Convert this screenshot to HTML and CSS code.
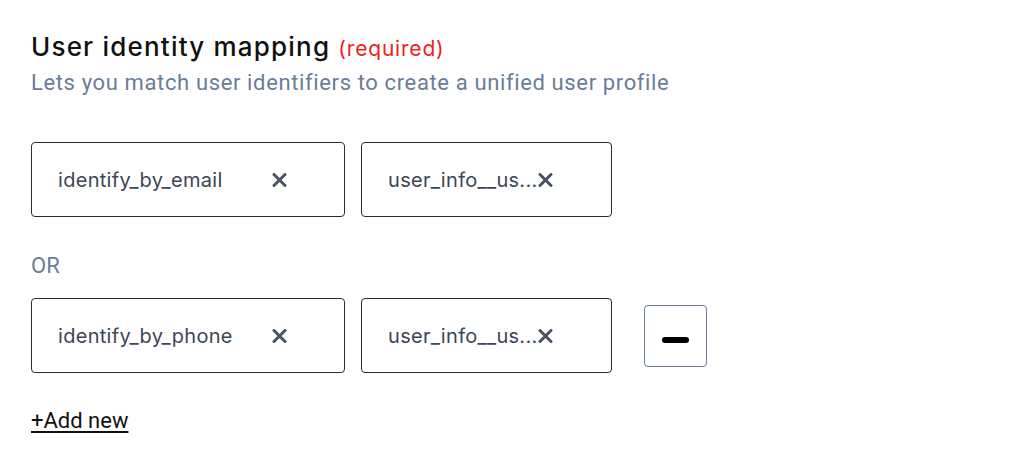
FILE: index.html
```html
<!DOCTYPE html>
<html lang="en">
<head>
  <meta charset="UTF-8">
  <title>User identity mapping</title>
  <link rel="stylesheet" href="styles.css">
</head>
<body>

<div class="mapping">
  <h2 class="title">User identity mapping <span class="required">(required)</span></h2>
  <p class="subtitle">Lets you match user identifiers to create a unified user profile</p>

  <!-- erste Zeile -->
  <div class="row">
    <div class="field field-rule">
      <span class="label">identify_by_email</span>
      <svg class="clear" width="15" height="14" viewBox="0 0 15 14"><path d="M2 1.5 L13 12.5 M13 1.5 L2 12.5" stroke="#4a5363" stroke-width="3" stroke-linecap="round"/></svg>
    </div>
    <div class="field field-key">
      <span class="label">user_info__us...</span>
      <svg class="clear" width="15" height="14" viewBox="0 0 15 14"><path d="M2 1.5 L13 12.5 M13 1.5 L2 12.5" stroke="#4a5363" stroke-width="3" stroke-linecap="round"/></svg>
    </div>
  </div>

  <div class="or">OR</div>

  <!-- zweite Zeile mit Entfernen-Button -->
  <div class="row">
    <div class="field field-rule">
      <span class="label">identify_by_phone</span>
      <svg class="clear" width="15" height="14" viewBox="0 0 15 14"><path d="M2 1.5 L13 12.5 M13 1.5 L2 12.5" stroke="#4a5363" stroke-width="3" stroke-linecap="round"/></svg>
    </div>
    <div class="field field-key">
      <span class="label">user_info__us...</span>
      <svg class="clear" width="15" height="14" viewBox="0 0 15 14"><path d="M2 1.5 L13 12.5 M13 1.5 L2 12.5" stroke="#4a5363" stroke-width="3" stroke-linecap="round"/></svg>
    </div>
    <button class="remove"><span class="bar"></span></button>
  </div>

  <a class="add-new" href="#">+Add new</a>
</div>

</body>
</html>
```

FILE: styles.css
```css
body {
  margin: 0;
  background: #fff;
  font-family: Roboto, sans-serif;
}
.mapping {
  padding: 31px 0 0 31px;
}
.title {
  margin: 0;
  font-family: Inter, sans-serif;
  font-weight: 500;
  font-size: 26px;
  line-height: 32px;
  letter-spacing: 1.2px;
  color: #111;
}
.required {
  font-weight: 400;
  font-size: 21px;
  letter-spacing: 0.8px;
  color: #f21c1c;
}
.subtitle {
  margin: 3px 0 0;
  font-size: 22px;
  line-height: 30px;
  letter-spacing: 0.63px;
  color: #6a7d98;
}
.row {
  display: flex;
  align-items: center;
  gap: 16px;
  margin-top: 44px;
}
.row + .or {
  margin-top: 37px;
}
.or + .row {
  margin-top: 20px;
}
.field {
  display: flex;
  align-items: center;
  box-sizing: border-box;
  height: 75px;
  padding-left: 26px;
  border: 1.5px solid #2b2b2b;
  border-radius: 4px;
  font-family: Inter, sans-serif;
  font-size: 20px;
  letter-spacing: 0.3px;
  color: #3d4655;
}
.field-rule {
  width: 314px;
}
.field-key {
  width: 251px;
}
.label {
  white-space: nowrap;
}
.field-rule .label {
  width: 214px;
}
.field-key .label {
  width: 150px;
}
.clear {
  display: block;
}
.or {
  font-size: 22px;
  line-height: 24px;
  color: #6a7d98;
}
.remove {
  box-sizing: border-box;
  width: 63px;
  height: 62px;
  margin-left: 16px;
  display: flex;
  align-items: center;
  justify-content: center;
  padding: 0;
  background: #fff;
  border: 1.5px solid #6a7d98;
  border-radius: 4px;
}
.remove .bar {
  display: block;
  width: 27px;
  height: 6px;
  margin-top: 8px;
  border-radius: 3px;
  background: #000;
}
.add-new {
  display: inline-block;
  margin-top: 35px;
  font-size: 22px;
  color: #111;
  text-decoration: underline;
  text-underline-offset: 3px;
}
```
